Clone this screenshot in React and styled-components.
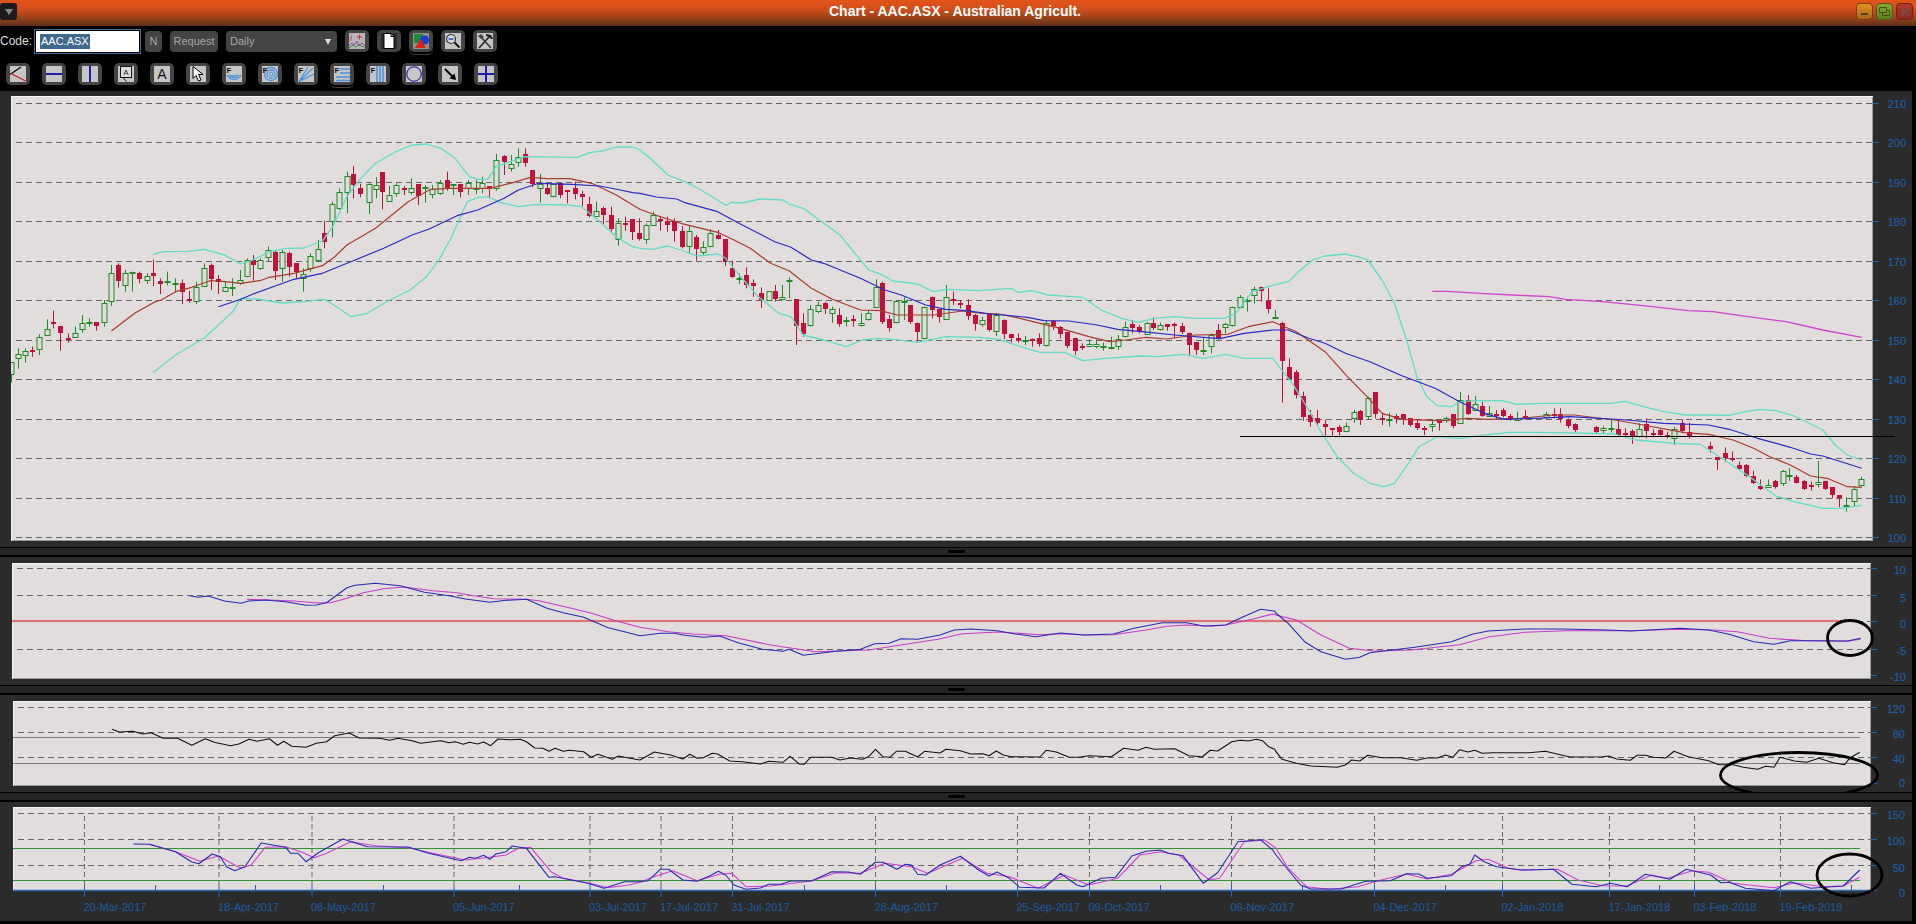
import React from "react";
import styled, { createGlobalStyle } from "styled-components";

const GlobalStyle = createGlobalStyle`
  html, body {
    margin: 0;
    padding: 0;
    background: #000;
    overflow: hidden;
  }
  text {
    font-family: "Liberation Sans", Arial, sans-serif;
  }
`;

const Frame = styled.div`
  width: 1916px;
  height: 924px;
  background: #000;
  font-family: "Liberation Sans", Arial, sans-serif;
  display: flex;
  flex-direction: column;
`;

const TitleBar = styled.div`
  height: 26px;
  flex: none;
  box-sizing: border-box;
  padding: 3px 3px 0 0;
  display: flex;
  align-items: flex-start;
  background: linear-gradient(#e3551a 0%, #d14e1a 35%, #8f3f1a 75%, #5c2f1a 100%);
`;

const MenuButton = styled.div`
  width: 17px;
  height: 17px;
  border-radius: 3px;
  background: #1c1c1c;
  display: flex;
  align-items: center;
  justify-content: center;
  &::after {
    content: "";
    border-left: 4px solid transparent;
    border-right: 4px solid transparent;
    border-top: 6px solid #8a8a8a;
  }
`;

const Title = styled.div`
  flex: 1;
  text-align: center;
  color: #fff;
  font-size: 14px;
  font-weight: bold;
  line-height: 17px;
  padding-left: 37px;
`;

const WindowButtons = styled.div`
  display: flex;
  gap: 3px;
`;

const WindowButton = styled.div`
  width: 17px;
  height: 17px;
  box-sizing: border-box;
  border-radius: 4px;
  border: 1px solid ${(p) => p.$edge};
  background: linear-gradient(${(p) => p.$from}, ${(p) => p.$to});
  display: flex;
  align-items: center;
  justify-content: center;
`;

const Toolbar = styled.div`
  height: 65px;
  flex: none;
  display: flex;
  flex-direction: column;
`;

const TopRow = styled.div`
  height: 33px;
  box-sizing: border-box;
  padding-top: 4px;
  display: flex;
  align-items: flex-start;
  gap: 8px;
`;

const CodeLabel = styled.span`
  color: #ddd;
  font-size: 12px;
  line-height: 23px;
  width: 32px;
  margin-right: -5px;
`;

const CodeInput = styled.div`
  width: 105px;
  height: 23px;
  box-sizing: border-box;
  background: #fff;
  border: 1px solid #000;
  outline: 1px solid #3d6a96;
  outline-offset: 0;
  padding-left: 4px;
  font-size: 11px;
  line-height: 20px;
  margin-right: -3px;
  margin-left: 0;
`;

const Selected = styled.span`
  background: #3f6a8e;
  color: #fff;
  display: inline-block;
  line-height: 15px;
  padding: 0 1px;
`;

const TextButton = styled.div`
  height: 21px;
  width: ${(p) => p.$w}px;
  box-sizing: border-box;
  margin-top: 1px;
  border-radius: 4px;
  background: #444;
  color: #a8a8a8;
  font-size: 11px;
  line-height: 21px;
  text-align: center;
`;

const SelectBox = styled.div`
  width: 111px;
  height: 21px;
  box-sizing: border-box;
  margin-top: 1px;
  margin-right: 0;
  padding: 0 6px 0 4px;
  border-radius: 4px;
  background: #444;
  color: #a8a8a8;
  font-size: 11px;
  line-height: 21px;
  display: flex;
  justify-content: space-between;
  align-items: center;
  &::after {
    content: "";
    border-left: 3px solid transparent;
    border-right: 3px solid transparent;
    border-top: 6px solid #ddd;
  }
`;

const IconGroup = styled.div`
  display: flex;
  gap: ${(p) => p.$gap}px;
  padding-left: ${(p) => p.$left || 0}px;
  padding-top: ${(p) => p.$top || 0}px;
  margin-top: ${(p) => p.$shift || 0}px;
`;

const IconButton = styled.div`
  width: 24px;
  height: 22px;
  border-radius: 5px;
  background: #444;
  display: flex;
  align-items: center;
  justify-content: center;
  box-shadow: ${(p) => (p.$focused ? "0 2px 0 #000, 0 3px 0 #3c3c3c" : "none")};
  svg {
    display: block;
    background: ${(p) => p.$face || "#c6c6c6"};
  }
`;

const Pane = styled.div`
  flex: none;
  height: ${(p) => p.$height}px;
  box-sizing: border-box;
  margin-right: 4px;
  background: #2b2b2b;
  padding: ${(p) => p.$top}px ${(p) => p.$right}px ${(p) => p.$bottom}px ${(p) => p.$left}px;
  display: flex;
`;

const Plot = styled.div`
  flex: 1;
  background: #e0dddc;
  box-shadow: inset 1px 1px 0 #f6f6f6, inset -1px -1px 0 #9a9a9a;
  svg {
    display: block;
    overflow: visible;
  }
`;

const Splitter = styled.div`
  flex: none;
  height: 10px;
  box-sizing: border-box;
  margin-right: 4px;
  background: #252525;
  border-top: 1px solid #000;
  border-bottom: 2px solid #000;
  display: flex;
  align-items: center;
  justify-content: center;
`;

const Grip = styled.div`
  width: 17px;
  height: 3px;
  border-radius: 2px;
  background: #000;
`;

const K = 2.45;
const C3 = [0, 100];
const C4 = [640, 100];
const C5 = [1276, 260];
const C6 = [0, 540];
const C7 = [640, 540];
const C8 = [1276, 540];

const X = (crop, x) => crop[0] + x / K;
const Y = (crop, y) => crop[1] + y / 3;

// each series was read off as pieces, sort by x to stitch them together
const series = (...parts) =>
  parts
    .flatMap(([crop, text]) =>
      text
        .trim()
        .split(/\s+/)
        .map((pair) => {
          const [x, y] = pair.split(",").map(Number);
          return [X(crop, x), Y(crop, y)];
        })
    )
    .sort((a, b) => a[0] - b[0])
    .map((p) => `${p[0].toFixed(1)},${p[1].toFixed(1)}`)
    .join(" ");

const candleRows = [
  [C3, `g 28 787 823 787 848,g 45 763 775 745 806,g 62 752 763 745 788,r 79 750 756 740 770,g 96 710 745 703 765,g 114 686 703 658 703,r 130 666 671 632 685,r 147 678 700 678 752,r 167 715 719 700 728,g 184 698 709 680 710,g 202 668 685 645 698,g 219 665 667 655 680,r 235 667 678 667 692,g 256 610 667 600 680,g 273 520 604 495 618,r 289 495 542 490 563,g 307 520 557 510 575,g 324 515 517 515 575,r 341 520 537 515 550,g 359 527 538 520 552,r 375 520 530 478 558,r 392 544 554 535 582,g 410 544 546 515 556,g 428 549 551 535 578,r 445 550 578 538 612,r 463 598 602 572 608,g 481 562 605 545 612,g 500 503 556 490 560,r 517 495 538 490 570,r 534 538 548 525 582,g 552 562 574 545 575,g 569 560 562 535 588,g 587 540 550 510 555,g 604 479 527 475 532,r 620 480 494 465 542,g 638 480 503 475 510,g 657 450 472 440 485,r 674 456 512 450 540,g 691 455 502 450 545,r 708 458 500 455 530,r 725 490 517 490 535,g 743 521 533 505 575,g 760 467 503 460 515,g 778 448 480 420 485,r 794 400 428 362 445,g 814 313 365 305 412,g 831 277 325 265 330,g 849 229 277 215 340,r 865 222 255 198 295,r 882 264 282 252 292,g 903 253 307 250 342,g 920 254 265 232 295,r 937 216 275 216 328,g 954 284 301 258 303,g 971 254 278 250 290,r 990 263 270 258 285,g 1007 265 278 235 285,r 1024 253 288 253 315,g 1042 260 262 255 308,g 1059 268 284 255 295,g 1077 248 277 240 285,r 1094 240 266 215 272,g 1111 253 255 253 285,r 1127 252 275 252 292,g 1146 248 264 240 285,g 1165 264 266 240 282,g 1182 248 264 230 280,r 1198 258 266 258 295,g 1216 181 266 162 272,r 1235 168 185 165 225,g 1252 193 206 165 215,g 1270 170 184 145 200,r 1286 162 190 145 200,r 1303 210 252 210 262,g 1322 253 265 222 308,r 1339 265 282 250 285,g 1356 253 290 250 292,r 1372 250 285 250 295,r 1390 270 273 270 310,r 1409 265 282 245 298,r 1426 283 292 272 318,r 1443 313 350 290 352,g 1461 332 346 305 350,r 1478 324 345 320 372,r 1497 346 388 320 400,g 1514 370 418 355 437,r 1531 370 375 350 392,r 1548 358 398 358 420,r 1565 400 418 355 422`],
  [C4, `g 15 376 418 370 432,g 32 346 377 335 378,r 49 358 362 348 392,r 66 362 375 350 395,r 83 362 393 355 425,r 103 393 442 378 445,g 121 393 438 378 460,r 137 410 447 405 482,g 155 442 456 424 468,g 172 398 438 388 442,r 190 405 416 390 418,r 208 418 488 418 498,r 225 503 531 482 533,g 243 533 535 520 552,r 260 525 555 502 565,r 278 550 558 538 590,r 296 580 600 562 624,g 315 574 600 574 602,r 331 574 597 555 605,g 349 592 598 555 600,g 366 540 542 532 595,r 382 598 680 598 735,r 400 668 700 640 710,g 417 628 675 615 680,g 435 616 635 605 640,r 453 608 626 605 642,g 471 628 640 620 668,r 487 645 672 625 680,g 505 660 662 650 680,r 522 658 665 645 680,g 542 668 675 640 680,g 559 640 658 630 662,g 577 562 622 538 625,r 593 548 665 545 672,r 610 658 684 645 695,g 628 603 667 600 670,g 646 602 604 592 660,r 662 616 666 616 672,r 679 668 696 668 725,g 697 622 716 620 718,r 715 592 632 590 655,r 732 628 652 628 668,g 750 592 658 555 660,r 767 598 603 575 615,r 784 610 615 600 625,r 803 616 650 598 660,r 821 645 672 642 692,g 838 660 673 650 680,r 855 642 690 642 695,g 873 645 692 640 708,r 891 660 702 658 718,r 909 703 715 703 728,r 926 714 720 700 728,g 944 720 722 708 735,r 960 718 725 715 740,r 977 715 732 700 740,g 995 668 734 660 740,r 1012 664 680 660 690,r 1029 680 702 678 715,r 1046 695 738 695 745,r 1065 715 755 715 765,r 1082 738 744 730 750,g 1100 733 739 718 742,g 1118 733 739 718 745,g 1135 738 740 728 752,g 1155 742 744 710 748,g 1172 716 738 705 750,g 1189 680 708 665 712,r 1205 672 684 660 700,r 1223 680 695 675 700,g 1241 668 702 665 705,r 1258 668 682 652 690,g 1275 674 686 668 692,r 1291 672 682 672 692,r 1308 672 678 668 715,r 1328 678 695 668 702,r 1345 700 737 698 765,r 1362 726 750 726 765,g 1380 750 752 712 765,g 1398 705 738 700 760,r 1416 690 715 672 718,g 1434 672 680 668 700,g 1451 622 675 620 680,g 1469 592 622 585 625,g 1486 600 604 590 635,g 1505 568 585 560 610,r 1521 562 575 560 605,r 1538 602 626 565 640,g 1556 650 652 630 655`],
  [C5, `r 15 190 305 185 428,r 32 320 355 295 358,r 49 337 407 330 415,r 66 408 472 395 482,r 83 465 485 450 500,r 101 475 490 450 498,r 120 493 502 480 528,r 137 505 507 505 528,r 154 500 515 495 532,g 172 498 514 488 517,g 190 457 475 450 488,r 207 452 478 450 495,g 226 415 470 410 480,r 242 397 462 397 475,r 260 475 479 458 495,g 277 478 481 458 500,r 293 468 476 462 490,r 311 463 478 463 495,r 328 475 497 475 500,r 345 490 505 478 510,r 363 505 507 498 525,g 383 493 500 478 515,r 399 484 488 480 512,g 417 475 482 470 488,r 433 462 497 462 505,g 451 420 488 396 490,r 470 421 462 405 465,g 488 432 451 408 452,r 505 437 467 425 470,g 522 458 466 438 470,r 539 462 468 450 478,r 556 450 468 445 472,r 573 468 478 462 482,g 591 475 481 455 483,r 610 468 472 450 478,g 662 463 473 455 478,r 680 462 465 445 475,r 697 463 478 445 488,r 715 479 498 475 505,r 732 493 510 490 517,r 784 500 515 498 522,g 801 505 510 498 522,g 820 505 508 478 518,r 838 508 525 480 528,r 855 520 524 505 532,r 872 512 528 508 552,g 890 508 530 490 532,r 907 492 512 475 535,r 924 520 524 508 532,r 941 510 525 508 530,r 958 525 528 515 535,g 976 506 532 500 555,r 995 488 512 478 518,r 1012 515 528 488 535,r 1063 557 566 545 578,r 1081 592 602 592 630,r 1100 580 595 562 605,r 1117 594 596 574 605,r 1134 614 626 605 630,r 1151 616 650 612 652,r 1168 648 668 632 672,r 1186 678 686 658 690,g 1206 676 683 658 684,r 1222 664 682 660 686,g 1241 634 670 630 678,g 1258 645 647 625 662,r 1274 650 668 645 670,r 1293 662 686 660 690,r 1311 675 678 665 692,g 1329 665 671 603 682,r 1345 664 687 662 690,r 1362 682 706 682 715,r 1379 706 716 706 742,g 1397 735 737 712 755,g 1415 688 724 678 738,g 1434 658 677 650 680`],
].flatMap(([crop, text]) =>
  text.split(",").map((row) => {
    const [kind, x, top, bottom, hi, lo] = row.split(" ");
    return {
      up: kind === "g",
      x: Math.round(X(crop, +x)) + 0.5,
      top: Y(crop, +top),
      bottom: Y(crop, +bottom),
      hi: Y(crop, +hi),
      lo: Y(crop, +lo),
    };
  })
);

const bandUpper = series(
  [C3, "375,463 400,455 460,454 500,448 550,465 590,492 620,480 660,455 700,445 745,444 790,423 815,380 850,290 880,240 920,190 970,155 1010,135 1045,132 1080,145 1115,175 1140,215 1150,230 1170,238 1195,238 1215,200 1250,185 1285,170 1415,172 1445,158 1480,152 1510,141 1550,141"],
  [C4, "0,150 30,180 68,225 110,245 150,270 210,316 225,307 250,309 295,297 350,300 365,312 400,325 450,370 490,405 520,450 560,510 585,520 620,543 680,552 718,575 750,568 830,572 910,565 925,577 960,572 1000,585 1085,592 1130,630 1180,655 1220,667 1260,655 1310,650 1360,655 1430,655 1460,640 1500,575 1550,556"],
  [C5, "30,65 60,30 90,0 120,-12 169,-18 200,-10 225,0 260,60 290,130 320,240 345,350 370,410 395,437 430,440 450,425 490,422 555,422 590,433 650,430 820,430 855,424 900,440 950,455 1005,465 1060,465 1110,466 1150,455 1185,448 1225,452 1270,468 1340,510 1370,555 1400,585 1435,600"]
);

const bandLower = series(
  [C3, "375,818 430,765 500,715 570,635 590,595 630,597 690,609 745,605 795,598 830,625 860,650 900,640 950,603 1005,570 1045,530 1075,480 1105,415 1130,345 1145,305 1170,293 1195,290 1225,307 1270,320 1315,313 1390,315 1425,320 1470,365 1510,410 1550,440"],
  [C4, "0,445 30,448 68,438 100,450 140,468 190,462 210,475 250,535 290,590 340,640 370,650 400,705 450,720 505,740 545,720 580,715 620,718 680,727 750,710 830,712 880,718 920,735 980,757 1040,757 1085,782 1140,775 1225,768 1270,770 1330,763 1380,775 1435,763 1480,775 1550,775"],
  [C5, "40,370 80,450 110,515 150,590 190,640 230,670 265,680 290,670 330,600 350,560 395,530 450,535 500,527 570,517 700,518 830,522 880,540 980,550 1040,553 1080,585 1160,650 1225,708 1270,725 1340,745 1385,745 1435,736"]
);

const fastAverage = series(
  [C3, "273,693 330,640 380,605 395,600 430,575 470,562 515,542 545,544 590,550 640,541 660,532 720,520 790,497 820,470 850,435 920,385 945,360 1000,305 1055,268 1100,265 1200,265 1250,250 1300,232 1340,236 1395,236 1450,250 1510,285 1550,315"],
  [C4, "0,328 50,350 100,370 190,397 230,420 270,445 320,490 365,512 420,565 470,597 540,630 590,632 630,645 680,645 720,645 790,633 840,640 880,642 920,652 980,670 1030,685 1100,710 1150,725 1190,720 1240,712 1290,717 1360,705 1440,703 1490,680 1550,665"],
  [C5, "50,215 120,275 175,350 225,412 260,460 310,478 400,482 470,475 520,478 600,475 680,465 730,465 830,480 900,495 1000,518 1060,523 1120,540 1170,565 1210,590 1260,615 1310,648 1350,655 1400,680 1435,682"]
);

const slowAverage = series(
  [C3, "535,620 590,598 620,582 720,538 790,520 870,480 940,445 1010,405 1050,388 1120,347 1170,330 1235,295 1270,270 1320,250 1400,253 1470,258 1520,270 1550,278"],
  [C4, "0,280 40,291 90,297 110,308 190,335 240,368 330,425 370,442 420,480 450,490 540,535 600,570 640,585 700,615 750,628 800,632 860,642 950,652 990,662 1050,663 1120,675 1170,688 1230,695 1310,705 1420,716 1480,700 1550,690"],
  [C5, "30,210 80,235 120,250 170,280 230,305 310,348 390,385 450,425 510,460 560,478 640,475 720,470 860,480 950,490 1060,495 1110,508 1180,535 1260,562 1310,582 1340,588 1435,625"]
);

const longAverage = series([C5, "383,94 420,94 500,100 580,105 670,110 710,118 800,125 900,137 1010,152 1070,155 1170,172 1250,185 1340,210 1435,232"]);

const macdFast = series(
  [C6, "465,167 485,172 510,168 550,183 590,190 610,183 650,180 700,185 750,196 775,195 800,188 850,143 870,136 920,130 980,137 1040,157 1100,167 1140,177 1200,187 1240,181 1290,178 1340,205 1380,218 1430,232 1490,263 1530,275"],
  [C7, "0,287 50,280 85,280 110,286 155,292 195,288 240,308 300,328 350,334 365,328 400,346 470,335 540,328 575,311 610,310 640,296 680,298 735,285 770,270 810,267 875,272 920,282 970,290 1030,279 1090,285 1160,282 1210,265 1280,248 1340,248 1380,258 1435,255 1470,235 1520,208 1555,213"],
  [C8, "0,220 30,250 70,305 110,335 170,358 205,352 230,338 340,322 430,305 480,283 520,273 610,267 700,267 810,270 870,273 990,265 1060,270 1110,283 1170,305 1220,313 1260,302 1330,302 1400,303 1432,295"]
);

const macdSlow = series(
  [C6, "605,178 660,180 720,183 770,188 810,188 850,175 890,158 940,146 990,141 1060,152 1120,158 1160,167 1210,176 1290,178 1320,182 1400,205 1450,220 1510,243"],
  [C7, "0,262 70,275 130,282 210,287 320,315 430,335 560,330 730,298 790,281 880,276 980,284 1030,281 1090,285 1160,284 1240,270 1290,259 1340,255 1400,259 1435,255 1500,238 1550,222"],
  [C8, "0,225 50,240 110,285 180,325 240,333 330,330 450,314 520,291 610,277 710,272 870,272 990,268 1070,270 1130,275 1210,295 1300,302 1400,304 1432,298"]
);

const strength = series(
  [C6, "275,568 292,576 325,574 350,582 370,578 400,595 435,595 470,616 503,596 525,607 565,617 585,612 610,598 630,604 660,596 680,616 695,604 715,619 750,622 775,610 800,605 820,587 855,579 880,594 930,595 955,601 975,595 1010,602 1030,610 1080,602 1100,608 1115,605 1135,613 1150,607 1170,612 1185,606 1202,617 1220,597 1250,599 1275,598 1290,605 1310,624 1330,625 1345,634 1360,625 1380,634 1395,631 1430,635 1448,652 1465,643 1500,658 1515,648 1540,654"],
  [C7, "0,660 35,636 75,645 105,657 122,643 140,655 155,653 177,640 190,642 220,663 250,665 295,672 315,664 350,667 368,649 390,672 402,673 418,652 470,652 490,660 515,654 545,658 560,650 577,628 595,650 612,652 628,634 650,634 680,651 697,634 735,639 750,628 785,632 810,642 840,641 855,647 873,633 890,645 910,650 980,651 995,631 1020,636 1050,651 1075,652 1100,647 1155,650 1185,625 1220,631 1240,622 1260,628 1310,626 1345,647 1378,650 1397,631 1415,633 1450,605 1470,601 1490,603 1510,598 1525,602 1540,620 1555,628"],
  [C8, "0,635 15,658 50,670 85,678 150,682 170,675 185,660 205,663 225,646 260,653 305,653 345,661 370,654 395,654 415,645 433,652 450,629 470,636 487,631 505,640 530,638 620,638 660,634 720,651 800,650 815,648 835,657 868,661 885,646 905,646 925,652 955,654 975,634 1010,650 1060,662 1085,674 1120,674 1145,682 1180,688 1200,679 1220,682 1235,652 1270,663 1300,667 1330,655 1365,668 1393,674 1405,655 1430,637"]
);

const stochFast = series(
  [C6, "327,912 365,913 430,935 470,966 487,971 520,942 540,950 555,980 575,992 600,980 640,909 700,922 712,940 730,940 750,965 780,938 840,897 900,920 1000,921 1050,940 1130,962 1150,952 1165,955 1185,946 1200,958 1215,942 1240,935 1255,918 1290,925 1345,1012 1360,1010 1400,1020 1440,1030 1480,1045 1530,1025"],
  [C7, "0,1025 20,1022 50,988 70,988 105,1020 140,1024 170,1008 192,994 210,1005 230,1035 260,1048 295,1044 315,1033 345,1033 370,1023 420,1023 470,995 510,996 540,1003 577,967 595,967 630,988 650,973 665,975 680,1003 700,1005 735,975 785,949 830,990 855,1008 875,996 905,1015 930,1042 990,1044 1030,1000 1070,1035 1085,1040 1130,1015 1165,1012 1205,948 1240,934 1275,930 1295,940 1330,947 1380,1030 1415,998 1465,905 1520,899 1550,930"],
  [C8, "0,945 60,1035 85,1047 160,1047 190,1035 220,1024 280,1022 320,1001 350,1002 370,1015 430,1007 455,980 475,972 487,945 510,965 540,980 600,990 680,988 725,1033 785,1040 820,1030 860,1040 905,1003 965,1018 1005,988 1065,1005 1090,1028 1110,1027 1150,1045 1220,1052 1260,1025 1310,1045 1390,1038 1430,990"]
);

const stochSlow = series(
  [C6, "365,912 430,935 490,964 535,948 590,985 615,975 650,922 700,920 740,937 770,953 800,940 860,905 920,917 1000,923 1060,940 1140,960 1200,952 1240,945 1270,925 1300,922 1350,995 1380,1015 1440,1028 1490,1043 1540,1035"],
  [C7, "0,1027 30,1012 80,992 140,1022 195,1003 225,1000 260,1040 320,1038 420,1023 480,998 540,1000 600,970 665,980 705,1000 790,955 850,1000 905,1010 975,1045 1040,1005 1100,1035 1170,1015 1225,945 1275,935 1320,945 1395,1020 1420,1015 1480,905 1530,900"],
  [C8, "0,925 30,985 75,1040 130,1048 200,1040 250,1022 320,1002 370,1017 430,1003 490,962 520,958 570,985 600,990 690,988 740,1020 800,1037 860,1038 920,1005 960,1015 1020,992 1060,997 1120,1030 1220,1043 1270,1028 1340,1040 1390,1038 1430,1012"]
);

const dateMarks = [
  [84.5, "20-Mar-2017"],
  [219, "18-Apr-2017"],
  [312, "08-May-2017"],
  [454, "05-Jun-2017"],
  [590, "03-Jul-2017"],
  [661, "17-Jul-2017"],
  [732.5, "31-Jul-2017"],
  [875.5, "28-Aug-2017"],
  [1017.5, "25-Sep-2017"],
  [1089.5, "09-Oct-2017"],
  [1231.5, "06-Nov-2017"],
  [1374.5, "04-Dec-2017"],
  [1502.5, "02-Jan-2018"],
  [1609.5, "17-Jan-2018"],
  [1694.5, "03-Feb-2018"],
  [1780.5, "19-Feb-2018"],
];
const minorMarks = [155.5, 255.5, 383.5, 519.5, 804.5, 946.5, 1160.5, 1302.5, 1445.5, 1659.5, 1851.5];

const AXIS_BLUE = "#1d62b4";

const PlotSvg = ({ x, y, w, h, children }) => (
  <svg width={w} height={h} viewBox={`${x} ${y} ${w} ${h}`}>
    {children}
  </svg>
);

// dashed level line with its tick and value, right edge is where the plot stops
const Level = ({ y, label, labelY, left, right, textRight }) => (
  <g>
    <line x1={left} x2={right} y1={y} y2={y} stroke="#666" strokeDasharray="6 4" />
    <line x1={right} x2={right + 6} y1={y} y2={y} stroke={AXIS_BLUE} />
    <text x={textRight} y={labelY + 4} textAnchor="end" fontSize="11" fill={AXIS_BLUE}>
      {label}
    </text>
  </g>
);

const Path = ({ points, color, width = 1.1 }) => (
  <polyline points={points} fill="none" stroke={color} strokeWidth={width} strokeLinejoin="round" />
);

const Candle = ({ up, x, top, bottom, hi, lo }) => {
  const color = up ? "#1f8a24" : "#c20f3c";
  const bodyTop = Math.round(top) + (up ? 0.5 : 0);
  const height = Math.max(Math.round(bottom - top), up ? 1 : 2);
  return (
    <g>
      <line x1={x} x2={x} y1={hi} y2={lo} stroke={color} />
      {up ? (
        <rect x={x - 2.5} y={bodyTop} width={5} height={height} fill="#e0dddc" stroke={color} />
      ) : (
        <rect x={x - 2.5} y={bodyTop} width={5} height={height} fill={color} />
      )}
    </g>
  );
};

const Ink = ({ cx, cy, rx, ry }) => (
  <ellipse cx={cx} cy={cy} rx={rx} ry={ry} fill="none" stroke="#000" strokeWidth="2.8" />
);

const PriceChart = () => (
  <PlotSvg x={11} y={96} w={1862} h={445}>
    <defs>
      <clipPath id="price-clip">
        <rect x="11" y="96" width="1900" height="445" />
      </clipPath>
    </defs>
    {[210, 200, 190, 180, 170, 160, 150, 140, 130, 120, 110, 100].map((v, i) => (
      <Level
        key={v}
        y={Math.round(103 + i * 39.45) + 0.5}
        label={v}
        labelY={104 + i * 39.45}
        left={16}
        right={1873}
        textRight={1906}
      />
    ))}
    <g clipPath="url(#price-clip)">
      {candleRows.map((c, i) => (
        <Candle key={i} {...c} />
      ))}
    </g>
    <Path points={bandUpper} color="#62dcc6" width={1.3} />
    <Path points={bandLower} color="#62dcc6" width={1.3} />
    <Path points={longAverage} color="#d044d0" width={1.3} />
    <Path points={fastAverage} color="#a83c2e" width={1.2} />
    <Path points={slowAverage} color="#2a2ac4" width={1.2} />
    <line x1="1240" x2="1895" y1="436.5" y2="436.5" stroke="#000" strokeWidth="1.2" />
  </PlotSvg>
);

const MacdChart = () => (
  <PlotSvg x={12} y={563} w={1859} h={116}>
    <Level y={568.5} label="10" labelY={570} left={17} right={1871} textRight={1906} />
    <Level y={595.5} label="5" labelY={597.5} left={17} right={1871} textRight={1906} />
    <Level y={621.5} label="0" labelY={624} left={17} right={1871} textRight={1906} />
    <Level y={649.5} label="-5" labelY={651} left={17} right={1871} textRight={1906} />
    <Level y={675.5} label="-10" labelY={677} left={1871} right={1871} textRight={1906} />
    <line x1="12" x2="1847" y1="621" y2="621" stroke="#eec4c4" strokeWidth="2.6" />
    <line x1="12" x2="1847" y1="621" y2="621" stroke="#cc2229" strokeWidth="1.2" />
    <Path points={macdSlow} color="#c83cc8" />
    <Path points={macdFast} color="#2a2ab4" />
    <Ink cx={1850} cy={638} rx={22.5} ry={17.5} />
  </PlotSvg>
);

const StrengthChart = () => (
  <PlotSvg x={13} y={701} w={1858} h={85}>
    <Level y={707.5} label="120" labelY={709} left={18} right={1871} textRight={1905} />
    <Level y={732.5} label="80" labelY={734} left={18} right={1871} textRight={1905} />
    <Level y={757.5} label="40" labelY={759} left={18} right={1871} textRight={1905} />
    <Level y={783.5} label="0" labelY={783} left={1871} right={1871} textRight={1905} />
    <line x1="13" x2="1860" y1="737.5" y2="737.5" stroke="#7c7c7c" />
    <line x1="13" x2="1860" y1="763.5" y2="763.5" stroke="#7c7c7c" />
    <Path points={strength} color="#111" />
    <Ink cx={1799} cy={775} rx={78.5} ry={22.5} />
  </PlotSvg>
);

const StochChart = () => (
  <PlotSvg x={13} y={807} w={1858} h={84}>
    <Level y={813.5} label="150" labelY={815} left={18} right={1871} textRight={1905} />
    <Level y={839.5} label="100" labelY={841} left={18} right={1871} textRight={1905} />
    <Level y={865.5} label="50" labelY={867.5} left={18} right={1871} textRight={1905} />
    <line x1="1871" x2="1877" y1="890.5" y2="890.5" stroke={AXIS_BLUE} />
    <text x="1905" y="897" textAnchor="end" fontSize="11" fill={AXIS_BLUE}>
      0
    </text>
    {dateMarks.map(([x, label]) => (
      <g key={label}>
        <line x1={x} x2={x} y1="816" y2="886" stroke="#666" strokeDasharray="5 3" />
        <line x1={x} x2={x} y1="885" y2="897" stroke={AXIS_BLUE} />
        <text x={x - 1} y="911" fontSize="11" fill="#1b5aa4">
          {label}
        </text>
      </g>
    ))}
    {minorMarks.map((x) => (
      <line key={x} x1={x} x2={x} y1="885" y2="891" stroke={AXIS_BLUE} />
    ))}
    <line x1="13" x2="1860" y1="848.5" y2="848.5" stroke="#2e9432" strokeWidth="1.2" />
    <line x1="13" x2="1860" y1="880.5" y2="880.5" stroke="#2e9432" strokeWidth="1.2" />
    <line x1="13" x2="1871" y1="890.5" y2="890.5" stroke="#2a68ae" strokeWidth="1.4" />
    <Path points={stochSlow} color="#d040d0" />
    <Path points={stochFast} color="#2a2ab4" />
    <Ink cx={1849.5} cy={875} rx={32.5} ry={21} />
  </PlotSvg>
);

const Icon = ({ children, focused, face }) => (
  <IconButton $focused={focused} $face={face}>
    <svg width="16" height="16" viewBox="0 0 16 16">
      {children}
    </svg>
  </IconButton>
);

const F = () => (
  <text x="0.5" y="7" fontSize="8" fontWeight="bold" fill="#111">
    F
  </text>
);

const FIB = "#4c93dc";

const topIcons = [
  <Icon key="a" face="#b9b4ba">
    <text x="1" y="8" fontSize="9" fontStyle="italic" fill="#c2342e">i</text>
    <path d="M8 4h5M10.5 1.5v5" stroke="#c2342e" fill="none" />
    <path d="M0 13l3-3 2 2 3-4 2 5 3-3 3 3" stroke="#a03cb0" fill="none" />
    <path d="M0 15l4-3 3 2 3-3 3 3 3-1" stroke="#3c8c3c" fill="none" />
  </Icon>,
  <Icon key="b" face="#2c2c2c">
    <path d="M3 0.5h7l3 3v12H3z" fill="#fff" stroke="#000" />
    <path d="M10 0.5v3h3" fill="none" stroke="#000" />
  </Icon>,
  <Icon key="c" focused face="#8f8f8f">
    <rect x="1" y="1" width="9" height="9" fill="#1f8a34" />
    <circle cx="11.5" cy="7" r="4.5" fill="#1a3cd0" />
    <path d="M7.5 6l5.5 9H2z" fill="#e0201c" />
  </Icon>,
  <Icon key="d">
    <circle cx="6" cy="6" r="4.5" fill="#d8d8e8" stroke="#333" strokeWidth="1.2" />
    <path d="M3.5 6h5" stroke="#2a3ab8" strokeWidth="1.4" />
    <path d="M9.5 9.5l5 5" stroke="#111" strokeWidth="2" />
  </Icon>,
  <Icon key="e">
    <path d="M2 15L12 4" stroke="#222" strokeWidth="1.6" />
    <path d="M14 15L4 4" stroke="#333" strokeWidth="1.6" />
    <path d="M9 1l5 1 2 4-2 0-2-2-3-1z" fill="#222" />
    <path d="M1 3l3-2 3 3-3 2z" fill="#444" />
  </Icon>,
];

const drawIcons = [
  <Icon key="1">
    <path d="M0 8.5L11 1" stroke="#000" strokeWidth="1.2" />
    <path d="M1 7.5L15.5 15" stroke="#c41e24" strokeWidth="1.4" />
  </Icon>,
  <Icon key="2">
    <rect x="0" y="7" width="16" height="2" fill="#1c1ca8" />
  </Icon>,
  <Icon key="3">
    <rect x="7" y="0" width="2" height="16" fill="#1c1ca8" />
  </Icon>,
  <Icon key="4">
    <rect x="2.5" y="0.5" width="11" height="11" fill="#ddd" stroke="#111" />
    <text x="8" y="9" fontSize="8" textAnchor="middle" fill="#222">A</text>
    <path d="M5 11.5l3.5 4" stroke="#111" fill="none" />
  </Icon>,
  <Icon key="5">
    <text x="8" y="13" fontSize="14" textAnchor="middle" fill="#111">A</text>
  </Icon>,
  <Icon key="6">
    <path d="M3 0.5v12l3-3 2.5 5.5 2.5-1-2.5-5.5H13z" fill="#fff" stroke="#000" />
  </Icon>,
  <Icon key="7">
    <F />
    <path d="M1 9c3 6 11 6 14 0M3 9c2 3.5 8 3.5 10 0M5 9c2 1.5 4 1.5 6 0" fill="none" stroke={FIB} strokeWidth="1.3" />
  </Icon>,
  <Icon key="8">
    <circle cx="9" cy="8" r="6.5" fill="none" stroke={FIB} strokeWidth="1.3" />
    <circle cx="9" cy="8" r="4" fill="none" stroke={FIB} strokeWidth="1.3" />
    <circle cx="9" cy="8" r="1.8" fill="none" stroke={FIB} />
    <F />
  </Icon>,
  <Icon key="9">
    <F />
    <path d="M1 15.5L10 1M1 15.5L15 2M1 15.5L16 8" fill="none" stroke={FIB} strokeWidth="1.2" />
  </Icon>,
  <Icon key="10" focused>
    <F />
    <path d="M6 3h10M6 7h10M2 11h14M2 14.5h14" fill="none" stroke={FIB} strokeWidth="1.5" />
  </Icon>,
  <Icon key="11">
    <F />
    <path d="M7 0v16M10 0v16M13 0v16" fill="none" stroke={FIB} strokeWidth="1.6" />
  </Icon>,
  <Icon key="12">
    <circle cx="8" cy="8" r="7.2" fill="none" stroke="#3636b0" strokeWidth="1.3" />
  </Icon>,
  <Icon key="13">
    <path d="M3 3L12 12" stroke="#000" strokeWidth="2" />
    <path d="M14 14L7.5 12.5 12.5 7.5z" fill="#000" />
  </Icon>,
  <Icon key="14">
    <path d="M0 8h16M8 0v16" stroke="#1c1ca8" strokeWidth="2" />
  </Icon>,
];

const App = () => (
  <Frame>
    <GlobalStyle />
    <TitleBar>
      <MenuButton />
      <Title>Chart - AAC.ASX - Australian Agricult.</Title>
      <WindowButtons>
        <WindowButton $from="#e0941e" $to="#a8641a" $edge="#7a3a14">
          <svg width="9" height="9" viewBox="0 0 9 9">
            <rect x="1" y="6" width="7" height="2" fill="#5a3a10" />
          </svg>
        </WindowButton>
        <WindowButton $from="#8aa830" $to="#5f7f22" $edge="#4a5a18">
          <svg width="11" height="11" viewBox="0 0 11 11">
            <path d="M0.5 1.5h7v5h-7zM3.5 6.5v3h7v-5h-3" fill="none" stroke="#3f5014" />
          </svg>
        </WindowButton>
        <WindowButton $from="#b83a2a" $to="#8c2a20" $edge="#6e2018">
          <svg width="10" height="10" viewBox="0 0 10 10">
            <path d="M1.5 1.5l7 7M8.5 1.5l-7 7" stroke="#74504a" strokeWidth="2" />
          </svg>
        </WindowButton>
      </WindowButtons>
    </TitleBar>
    <Toolbar>
      <TopRow>
        <CodeLabel>Code:</CodeLabel>
        <CodeInput>
          <Selected>AAC.ASX</Selected>
        </CodeInput>
        <TextButton $w={17}>N</TextButton>
        <TextButton $w={48}>Request</TextButton>
        <SelectBox>Daily</SelectBox>
        <IconGroup $gap={8} $shift={0}>{topIcons}</IconGroup>
      </TopRow>
      <IconGroup $gap={12} $left={6} $top={4}>
        {drawIcons}
      </IconGroup>
    </Toolbar>
    <Pane $height={456} $top={5} $right={39} $bottom={6} $left={11}>
      <Plot>
        <PriceChart />
      </Plot>
    </Pane>
    <Splitter>
      <Grip />
    </Splitter>
    <Pane $height={128} $top={6} $right={41} $bottom={6} $left={12}>
      <Plot>
        <MacdChart />
      </Plot>
    </Pane>
    <Splitter>
      <Grip />
    </Splitter>
    <Pane $height={97} $top={6} $right={41} $bottom={6} $left={13}>
      <Plot>
        <StrengthChart />
      </Plot>
    </Pane>
    <Splitter>
      <Grip />
    </Splitter>
    <Pane $height={119} $top={5} $right={41} $bottom={30} $left={13}>
      <Plot>
        <StochChart />
      </Plot>
    </Pane>
  </Frame>
);

export default App;
